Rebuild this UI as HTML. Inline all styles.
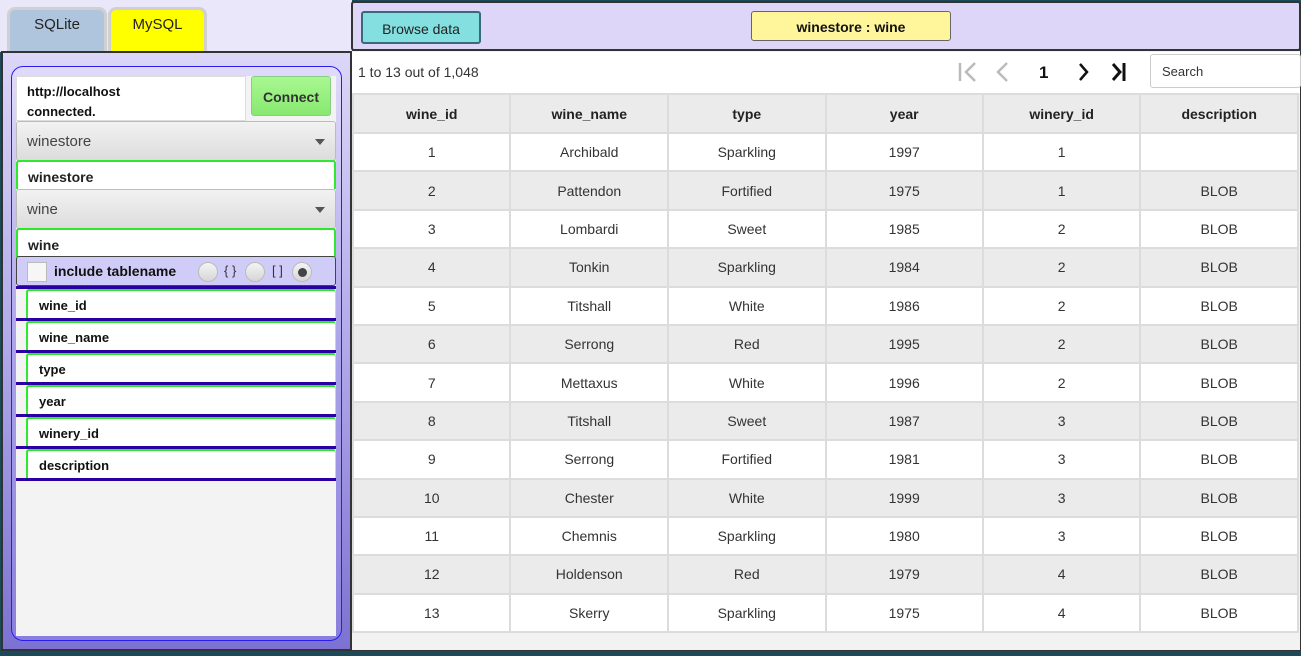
<!DOCTYPE html>
<html><head><meta charset="utf-8"><style>
*{box-sizing:border-box;margin:0;padding:0}
body{width:1301px;height:656px;overflow:hidden;font-family:"Liberation Sans",sans-serif;background:#1d4a5a;position:relative}
.a{position:absolute}
.tab{top:7px;height:44px;border:3px solid #d0d0d0;border-bottom:none;border-radius:8px 8px 0 0;text-align:center;font-size:15px;padding-top:6px;color:#222}
.fld{left:16px;width:320px;background:#fff;border:2px solid #2ee82e;border-bottom:none;border-radius:3px 3px 0 0;font-weight:bold;font-size:14px;padding:7px 0 0 10px;color:#222}
.combo{left:16px;width:320px;height:40px;background:linear-gradient(#f2f2f2,#dcdcdc);border:1px solid #bbb;border-radius:3px;font-size:15px;color:#444;padding:11px 0 0 10px}
.combo:after{content:"";position:absolute;right:10px;top:17px;border:5px solid transparent;border-top:6px solid #555}
.col{left:16px;width:320px;height:32px;border-bottom:3px solid #2a00a0}
.col div{position:absolute;left:10px;top:0;right:0;height:29px;background:#fff;border:2px solid #2ee82e;border-right:1px solid #aee8ae;border-bottom:none;border-radius:3px 3px 0 0;font-weight:bold;font-size:13px;padding:7px 0 0 11px;color:#111}
.rad{width:20px;height:20px;border-radius:50%;background:linear-gradient(#f4f4f4,#d6d6d6);border:1px solid #bbb;top:4px}
table{position:absolute;left:352px;top:93px;width:947px;border-collapse:collapse;font-size:14px;color:#333}
td,th{border:2px solid #dcdcdc;text-align:center;height:38.4px;width:158px;padding:0}
th{background:#ebebeb;font-weight:bold;color:#222;height:39px}
td{background:#fff}
tr:nth-child(odd) td{background:#ebebeb}
</style></head><body>
<div class="a" style="left:0;top:0;width:352px;height:52px;background:#ebe7fb"></div>
<div class="a tab" style="left:7px;width:100px;background:#afc4dd">SQLite</div>
<div class="a tab" style="left:108px;width:99px;background:#ffff00">MySQL</div>
<div class="a" style="left:1px;top:51px;width:351px;height:600px;border:2px solid #333;background:linear-gradient(#dcd6f8,#b0a8ea 50%,#7c72d2)"></div>
<div class="a" style="left:11px;top:66px;width:331px;height:575px;border:1.5px solid #2a1cf0;border-radius:12px;background:linear-gradient(#e0dbfa,#aaa2ea 50%,#8a80dc)"></div>
<div class="a" style="left:16px;top:76px;width:320px;height:560px;background:#f3f3f3"></div>
<div class="a" style="left:16px;top:76px;width:230px;height:45px;background:#fff;border:1px solid #ddd;font-weight:bold;font-size:13px;line-height:20px;padding:5px 0 0 10px;color:#111">http://localhost<br>connected.</div>
<div class="a" style="left:251px;top:76px;width:80px;height:40px;background:linear-gradient(#a8f890,#88e870);border:1px solid #8c8;border-radius:3px;font-weight:bold;font-size:14px;text-align:center;padding-top:12px;color:#333">Connect</div>
<div class="a combo" style="top:121px">winestore</div>
<div class="a fld" style="top:160px;height:29px">winestore</div>
<div class="a combo" style="top:189px">wine</div>
<div class="a fld" style="top:228px;height:29px">wine</div>
<div class="a" style="left:16px;top:256px;width:320px;height:30px;background:#d0ccf8;border:1px solid #444;border-radius:3px"></div>
<div class="a" style="left:27px;top:262px;width:20px;height:20px;background:#f6f6f6;border:1px solid #bbb"></div>
<div class="a" style="left:54px;top:263px;font-weight:bold;font-size:14px;color:#111">include tablename</div>
<div class="a rad" style="left:198px;top:262px"></div>
<div class="a" style="left:224px;top:263px;font-size:13px;color:#333">{ }</div>
<div class="a rad" style="left:245px;top:262px"></div>
<div class="a" style="left:272px;top:263px;font-size:13px;color:#333">[ ]</div>
<div class="a rad" style="left:292px;top:262px"></div>
<div class="a" style="left:298px;top:268px;width:9px;height:9px;border-radius:50%;background:#444"></div>
<div class="a" style="left:16px;top:286px;width:320px;height:3px;background:#2a00a0"></div>
<div class="a col" style="top:289px"><div>wine_id</div></div>
<div class="a col" style="top:321px"><div>wine_name</div></div>
<div class="a col" style="top:353px"><div>type</div></div>
<div class="a col" style="top:385px"><div>year</div></div>
<div class="a col" style="top:417px"><div>winery_id</div></div>
<div class="a col" style="top:449px"><div>description</div></div>

<div class="a" style="left:351px;top:1px;width:950px;height:50px;background:#ddd6f8;border:2px solid #333;border-radius:3px"></div>
<div class="a" style="left:361px;top:11px;width:120px;height:33px;background:#84e0e0;border:2px solid #3a6a7a;border-radius:3px;font-size:14px;text-align:center;padding-top:8px;color:#222">Browse data</div>
<div class="a" style="left:751px;top:11px;width:200px;height:30px;background:#fff59a;border:1px solid #666;border-radius:3px;font-size:14px;font-weight:bold;text-align:center;padding-top:7px;color:#111">winestore : wine</div>
<div class="a" style="left:351px;top:51px;width:950px;height:600px;background:#f2f2f2;border:1px solid #333;border-top:none"></div>
<div class="a" style="left:352px;top:52px;width:948px;height:41px;background:#fff"></div>
<div class="a" style="left:358px;top:64px;font-size:14px;color:#333">1 to 13 out of 1,048</div>
<svg class="a" style="left:955px;top:60px" width="185" height="24" viewBox="0 0 185 24"><g fill="none" stroke-width="2.5"><path d="M5 3V21M20 3L11 12L20 21" stroke="#bbb"/><path d="M52 3L43 12L52 21" stroke="#bbb"/><path d="M125 4L132 12L125 20" stroke="#111"/><path d="M158 4L165 12L158 20M169 3V21" stroke="#111" stroke-width="3"/></g><text x="84" y="18" font-family="Liberation Sans" font-weight="bold" font-size="17" fill="#111">1</text></svg>
<div class="a" style="left:1150px;top:54px;width:151px;height:34px;background:#fff;border:1px solid #ccc;border-radius:3px;font-size:13px;padding:9px 0 0 11px;color:#333">Search</div>
<table>
<tr><th>wine_id</th><th>wine_name</th><th>type</th><th>year</th><th>winery_id</th><th>description</th></tr>
<tr><td>1</td><td>Archibald</td><td>Sparkling</td><td>1997</td><td>1</td><td></td></tr>
<tr><td>2</td><td>Pattendon</td><td>Fortified</td><td>1975</td><td>1</td><td>BLOB</td></tr>
<tr><td>3</td><td>Lombardi</td><td>Sweet</td><td>1985</td><td>2</td><td>BLOB</td></tr>
<tr><td>4</td><td>Tonkin</td><td>Sparkling</td><td>1984</td><td>2</td><td>BLOB</td></tr>
<tr><td>5</td><td>Titshall</td><td>White</td><td>1986</td><td>2</td><td>BLOB</td></tr>
<tr><td>6</td><td>Serrong</td><td>Red</td><td>1995</td><td>2</td><td>BLOB</td></tr>
<tr><td>7</td><td>Mettaxus</td><td>White</td><td>1996</td><td>2</td><td>BLOB</td></tr>
<tr><td>8</td><td>Titshall</td><td>Sweet</td><td>1987</td><td>3</td><td>BLOB</td></tr>
<tr><td>9</td><td>Serrong</td><td>Fortified</td><td>1981</td><td>3</td><td>BLOB</td></tr>
<tr><td>10</td><td>Chester</td><td>White</td><td>1999</td><td>3</td><td>BLOB</td></tr>
<tr><td>11</td><td>Chemnis</td><td>Sparkling</td><td>1980</td><td>3</td><td>BLOB</td></tr>
<tr><td>12</td><td>Holdenson</td><td>Red</td><td>1979</td><td>4</td><td>BLOB</td></tr>
<tr><td>13</td><td>Skerry</td><td>Sparkling</td><td>1975</td><td>4</td><td>BLOB</td></tr>
</table>
</body></html>
